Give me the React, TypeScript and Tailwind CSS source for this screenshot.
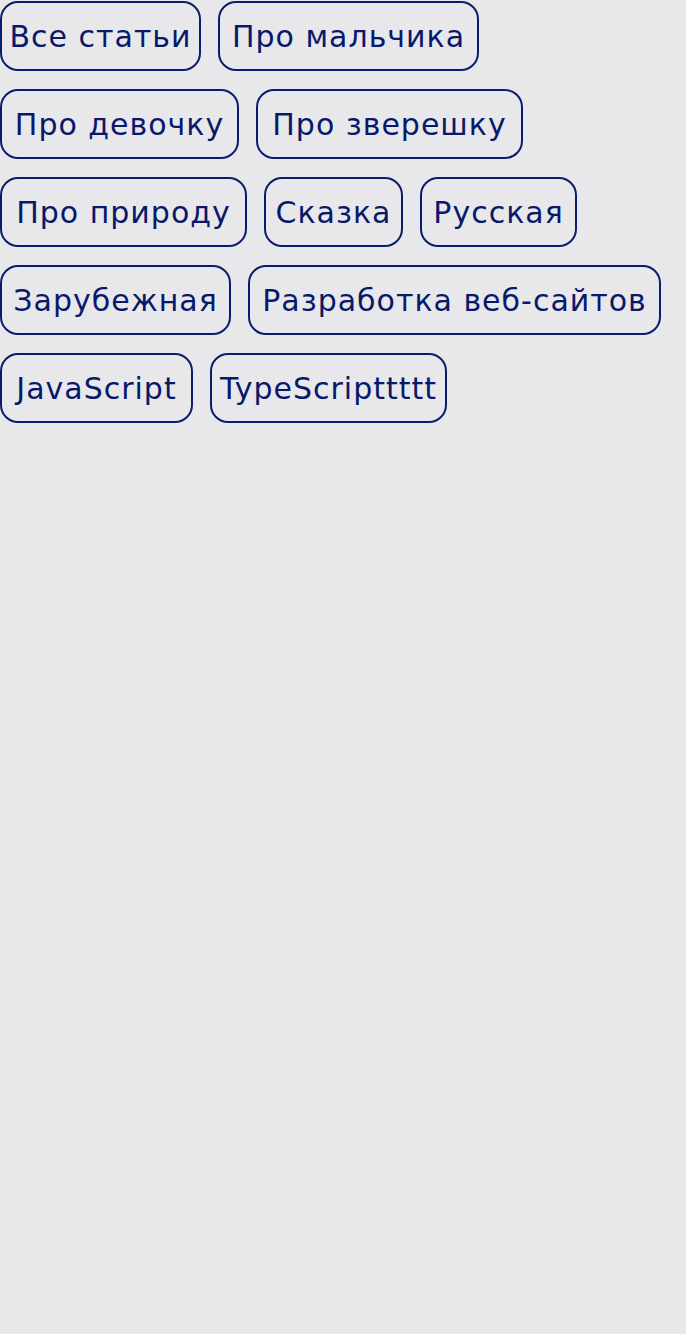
const tags: { label: string; w: number }[] = [
  { label: "Все статьи", w: 201 },
  { label: "Про мальчика", w: 261 },
  { label: "Про девочку", w: 239 },
  { label: "Про зверешку", w: 267 },
  { label: "Про природу", w: 247 },
  { label: "Сказка", w: 139 },
  { label: "Русская", w: 157 },
  { label: "Зарубежная", w: 231 },
  { label: "Разработка веб-сайтов", w: 413 },
  { label: "JavaScript", w: 193 },
  { label: "TypeScripttttt", w: 237 },
];

const widthClass: Record<number, string> = {
  201: "w-[201px]",
  261: "w-[261px]",
  239: "w-[239px]",
  267: "w-[267px]",
  247: "w-[247px]",
  139: "w-[139px]",
  157: "w-[157px]",
  231: "w-[231px]",
  413: "w-[413px]",
  193: "w-[193px]",
  237: "w-[237px]",
};

export default function App() {
  return (
    <div className="min-h-[1334px] w-full bg-[#e8e8ea] font-['DejaVu_Sans',sans-serif]">
      <ul className="flex flex-wrap gap-x-[17px] gap-y-[18px] pt-px">
        {tags.map((t) => (
          <li key={t.label}>
            <button
              className={`${widthClass[t.w]} flex h-[70px] items-center justify-center whitespace-nowrap rounded-[18px] border-2 border-[#0a1d6c] pt-[1px] text-[30px] tracking-[1px] text-[#08196b]`}
            >
              {t.label}
            </button>
          </li>
        ))}
      </ul>
    </div>
  );
}
